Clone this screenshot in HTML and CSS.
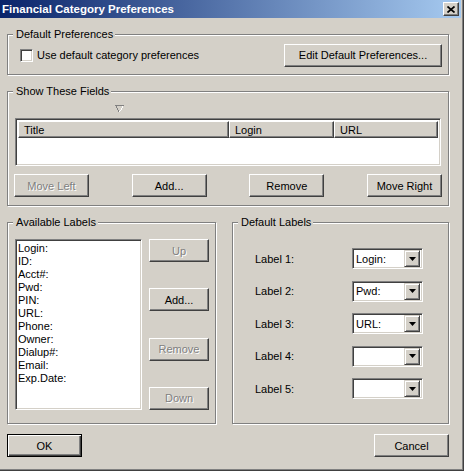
FILE: index.html
```html
<!DOCTYPE html>
<html lang="en">
<head>
    <meta charset="UTF-8">
    <title>Financial Category Preferences</title>
    <link rel="stylesheet" href="styles.css">
</head>
<body>
    <div class="window">
        <div class="titlebar">
            <span class="title">Financial Category Preferences</span>
            <span class="close">
                <svg width="8" height="7" viewBox="0 0 8 7"><path d="M0.5 0.5 L7.5 6.5 M7.5 0.5 L0.5 6.5" stroke="#000" stroke-width="1.7" fill="none"/></svg>
            </span>
        </div>

        <div class="content">
            <div class="group group-defaults">
                <span class="legend">Default Preferences</span>
                <label class="check"><span class="checkbox"></span>Use default category preferences</label>
                <button class="btn btn-edit">Edit Default Preferences...</button>
            </div>

            <div class="group group-fields">
                <span class="legend">Show These Fields</span>
                <div class="sort-row">
                    <svg class="sort-arrow" width="9" height="7" viewBox="0 0 9 7" shape-rendering="crispEdges"><path d="M0 0 H9 V1 H0 Z M1 1 H2 V3 H1 Z M2 3 H3 V5 H2 Z M3 5 H4 V7 H3 Z" fill="#808080"/><path d="M7 1 H8 V3 H7 Z M6 3 H7 V5 H6 Z M5 5 H6 V6 H5 Z M4 6 H5 V7 H4 Z" fill="#fff"/></svg>
                </div>
                <div class="listview">
                    <div class="lv-header">
                        <span class="lv-col col-title">Title</span>
                        <span class="lv-col col-login">Login</span>
                        <span class="lv-col col-url">URL</span>
                    </div>
                </div>
                <div class="btn-row">
                    <button class="btn disabled">Move Left</button>
                    <button class="btn">Add...</button>
                    <button class="btn">Remove</button>
                    <button class="btn">Move Right</button>
                </div>
            </div>

            <div class="lower">
                <div class="group group-available">
                    <span class="legend">Available Labels</span>
                    <div class="listbox">
                        <div>Login:</div>
                        <div>ID:</div>
                        <div>Acct#:</div>
                        <div>Pwd:</div>
                        <div>PIN:</div>
                        <div>URL:</div>
                        <div>Phone:</div>
                        <div>Owner:</div>
                        <div>Dialup#:</div>
                        <div>Email:</div>
                        <div>Exp.Date:</div>
                    </div>
                    <div class="side-buttons">
                        <button class="btn btn-small disabled">Up</button>
                        <button class="btn btn-small">Add...</button>
                        <button class="btn btn-small disabled">Remove</button>
                        <button class="btn btn-small disabled">Down</button>
                    </div>
                </div>

                <div class="group group-labels">
                    <span class="legend">Default Labels</span>
                    <div class="label-row"><span class="label-name">Label 1:</span><span class="combo"><span class="combo-text">Login:</span><span class="combo-btn"><svg width="7" height="4" viewBox="0 0 7 4"><path d="M0 0 H7 L3.5 4 Z" fill="#000"/></svg></span></span></div>
                    <div class="label-row"><span class="label-name">Label 2:</span><span class="combo"><span class="combo-text">Pwd:</span><span class="combo-btn"><svg width="7" height="4" viewBox="0 0 7 4"><path d="M0 0 H7 L3.5 4 Z" fill="#000"/></svg></span></span></div>
                    <div class="label-row"><span class="label-name">Label 3:</span><span class="combo"><span class="combo-text">URL:</span><span class="combo-btn"><svg width="7" height="4" viewBox="0 0 7 4"><path d="M0 0 H7 L3.5 4 Z" fill="#000"/></svg></span></span></div>
                    <div class="label-row"><span class="label-name">Label 4:</span><span class="combo"><span class="combo-text"></span><span class="combo-btn"><svg width="7" height="4" viewBox="0 0 7 4"><path d="M0 0 H7 L3.5 4 Z" fill="#000"/></svg></span></span></div>
                    <div class="label-row"><span class="label-name">Label 5:</span><span class="combo"><span class="combo-text"></span><span class="combo-btn"><svg width="7" height="4" viewBox="0 0 7 4"><path d="M0 0 H7 L3.5 4 Z" fill="#000"/></svg></span></span></div>
                </div>
            </div>

            <div class="dialog-buttons">
                <button class="btn btn-default">OK</button>
                <button class="btn">Cancel</button>
            </div>
        </div>
    </div>
</body>
</html>
```

FILE: styles.css
```css
* {
    box-sizing: border-box;
}

body {
    margin: 0;
    font-family: "Liberation Sans", Arial, sans-serif;
    font-size: 11px;
    color: #000;
    background-color: #d4d0c8;
}

.window {
    width: 464px;
    height: 471px;
    background-color: #d4d0c8;
    border-right: 1px solid #404040;
    border-bottom: 1px solid #404040;
    box-shadow: inset -1px -1px 0 #808080;
}

.titlebar {
    height: 18px;
    margin-right: 2px;
    display: flex;
    align-items: center;
    justify-content: space-between;
    padding: 0 2px 0 2px;
    background: linear-gradient(to right, #0a246a, #a6caf0);
}

.title {
    color: #fff;
    font-weight: bold;
    font-size: 11.5px;
}

.close {
    width: 16px;
    height: 14px;
    display: flex;
    align-items: center;
    justify-content: center;
    background-color: #d4d0c8;
    border: 1px solid;
    border-color: #fff #404040 #404040 #fff;
    box-shadow: inset -1px -1px 0 #808080;
}

.content {
    padding: 16px 0 0 7px;
}

/* etched group box */
.group {
    position: relative;
    border: 1px solid #808080;
    box-shadow: 1px 1px 0 #fff, inset 1px 1px 0 #fff;
}

.legend {
    position: absolute;
    top: -7px;
    left: 5px;
    padding: 0 2px 0 3px;
    line-height: 13px;
    background-color: #d4d0c8;
}

/* buttons */
.btn {
    font-family: inherit;
    font-size: 11px;
    font-weight: normal;
    color: #000;
    width: 75px;
    height: 23px;
    padding: 0;
    background-color: #d4d0c8;
    border: 1px solid;
    border-color: #fff #404040 #404040 #fff;
    border-radius: 0;
    box-shadow: inset -1px -1px 0 #808080;
}

.btn.disabled {
    color: #808080;
    text-shadow: 1px 1px 0 #fff;
}

.btn-default {
    border-color: #000;
    box-shadow: inset 1px 1px 0 #fff, inset -1px -1px 0 #404040, inset -2px -2px 0 #808080;
}

.btn-edit {
    width: 158px;
}

.btn-small {
    width: 60px;
}

/* sunken fields */
.checkbox,
.listview,
.listbox,
.combo {
    background-color: #fff;
    border: 1px solid;
    border-color: #808080 #fff #fff #808080;
    box-shadow: inset 1px 1px 0 #404040, inset -1px -1px 0 #d4d0c8;
}

/* default preferences */
.group-defaults {
    width: 442px;
    height: 41px;
    display: flex;
    align-items: center;
    justify-content: space-between;
    padding: 1px 6px 0 12px;
}

.check {
    display: flex;
    align-items: center;
}

.checkbox {
    width: 13px;
    height: 13px;
    margin-right: 4px;
}

/* show these fields */
.group-fields {
    width: 442px;
    margin-top: 16px;
    padding: 0 6px 8px 7px;
}

.sort-row {
    height: 26px;
    padding: 13px 0 0 100px;
}

.sort-arrow {
    display: block;
}

.listview {
    height: 48px;
    margin-right: 1px;
    padding: 2px;
}

.lv-header {
    display: flex;
    height: 17px;
}

.lv-col {
    display: flex;
    align-items: center;
    padding-left: 5px;
    background-color: #d4d0c8;
    border: 1px solid;
    border-color: #fff #404040 #404040 #fff;
    box-shadow: inset -1px -1px 0 #808080;
}

.col-title {
    width: 211px;
}

.col-login {
    width: 105px;
}

.col-url {
    flex: 1;
}

.btn-row {
    display: flex;
    justify-content: space-between;
    margin: 8px 0 0 -1px;
}

/* lower groups */
.lower {
    display: flex;
    gap: 16px;
    margin-top: 16px;
}

.group-available {
    width: 209px;
    height: 202px;
    display: flex;
    gap: 7px;
    padding: 16px 0 0 7px;
}

.listbox {
    width: 127px;
    height: 171px;
    padding: 2px 0 0 2px;
    line-height: 13px;
}

.side-buttons {
    height: 171px;
    display: flex;
    flex-direction: column;
    justify-content: space-between;
}

.group-labels {
    width: 217px;
    height: 202px;
    display: flex;
    flex-direction: column;
    gap: 11.5px;
    padding: 25px 0 0 22px;
}

.label-row {
    display: flex;
    align-items: center;
    height: 21px;
}

.label-name {
    width: 97px;
}

.combo {
    width: 71px;
    height: 21px;
    display: flex;
    align-items: center;
    padding: 2px;
}

.combo-text {
    flex: 1;
    padding-left: 1px;
}

.combo-btn {
    width: 16px;
    height: 17px;
    display: flex;
    align-items: center;
    justify-content: center;
    background-color: #d4d0c8;
    border: 1px solid;
    border-color: #d4d0c8 #404040 #404040 #d4d0c8;
    box-shadow: inset 1px 1px 0 #fff, inset -1px -1px 0 #808080;
}

.dialog-buttons {
    width: 442px;
    display: flex;
    justify-content: space-between;
    margin-top: 10px;
}
```
